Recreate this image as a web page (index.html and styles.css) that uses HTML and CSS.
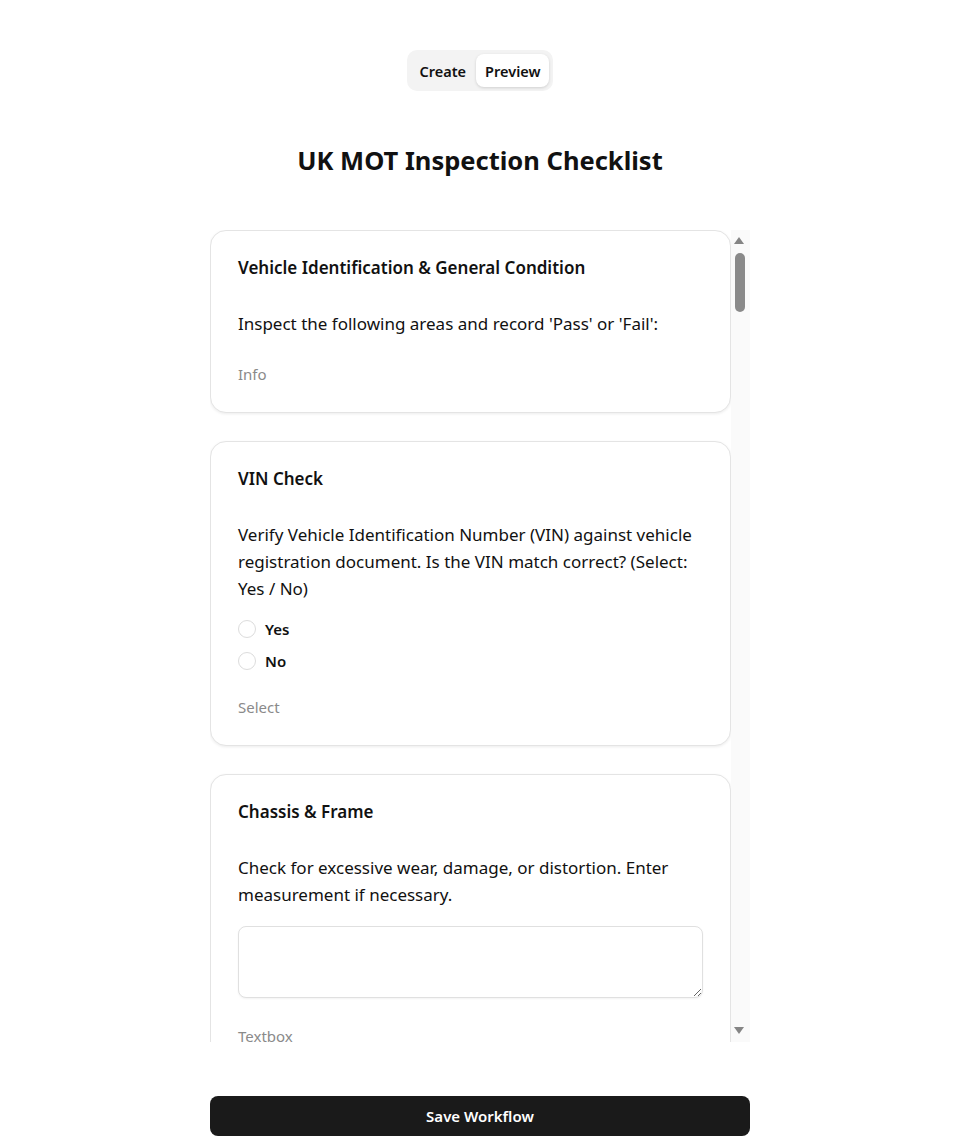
FILE: index.html
```html
<!DOCTYPE html>
<html lang="en">
<head>
<meta charset="utf-8">
<title>UK MOT Inspection Checklist</title>
<link rel="stylesheet" href="styles.css">
</head>
<body>
<div class="page">
  <div class="toggle-wrap">
    <div class="toggle">
      <button class="toggle-btn">Create</button>
      <button class="toggle-btn active">Preview</button>
    </div>
  </div>
  <h1 class="title">UK MOT Inspection Checklist</h1>
  <div class="scroller">
    <div class="list">
      <div class="card">
        <h2 class="card-title">Vehicle Identification &amp; General Condition</h2>
        <p class="card-desc">Inspect the following areas and record 'Pass' or 'Fail':</p>
        <div class="card-type">Info</div>
      </div>
      <div class="card">
        <h2 class="card-title">VIN Check</h2>
        <p class="card-desc">Verify Vehicle Identification Number (VIN) against vehicle registration document. Is the VIN match correct? (Select: Yes / No)</p>
        <div class="options">
          <label class="option"><span class="radio"></span>Yes</label>
          <label class="option"><span class="radio"></span>No</label>
        </div>
        <div class="card-type">Select</div>
      </div>
      <div class="card">
        <h2 class="card-title">Chassis &amp; Frame</h2>
        <p class="card-desc">Check for excessive wear, damage, or distortion. Enter measurement if necessary.</p>
        <textarea class="textbox"></textarea>
        <div class="card-type tb">Textbox</div>
      </div>
    </div>
    <div class="scrollbar">
      <div class="sb-btn up">
        <svg width="10" height="7" viewBox="0 0 10 7"><polygon points="5,0 10,7 0,7" fill="#858585"/></svg>
      </div>
      <div class="sb-track">
        <div class="sb-thumb"></div>
      </div>
      <div class="sb-btn down">
        <svg width="10" height="7" viewBox="0 0 10 7"><polygon points="0,0 10,0 5,7" fill="#858585"/></svg>
      </div>
    </div>
  </div>
  <button class="save">Save Workflow</button>
</div>
</body>
</html>
```
FILE: styles.css
```css
* { box-sizing: border-box; }
html, body { margin: 0; padding: 0; background: #fff; }
body {
  font-family: "Noto Sans", "Open Sans", sans-serif;
  color: #111;
}
.page {
  width: 540px;
  margin: 0 auto;
  padding: 50px 0 0;
  position: relative;
  left: 2px;
}
.toggle-wrap { display: flex; justify-content: center; }
.toggle {
  display: flex;
  gap: 1px;
  padding: 4px;
  background: #f3f3f3;
  border-radius: 10px;
}
.toggle-btn {
  font-family: inherit;
  font-size: 14.5px;
  font-weight: 600;
  color: #111;
  background: transparent;
  border: 0;
  border-radius: 8px;
  padding: 0 9px;
  height: 33px;
}
.toggle-btn.active {
  background: #fff;
  box-shadow: 0 1px 3px rgba(0,0,0,0.15);
}
.title {
  text-align: center;
  font-size: 25.5px;
  font-weight: 700;
  margin: 49px 0 0;
  line-height: 40px;
}
.scroller {
  margin-top: 50px;
  height: 812px;
  display: flex;
}
.list {
  flex: 1;
  min-width: 0;
  overflow: hidden;
  display: flex;
  flex-direction: column;
  gap: 28px;
  padding-bottom: 4px;
}
.scrollbar {
  flex: none;
  width: 19px;
  background: #fafafa;
  display: flex;
  flex-direction: column;
}
.sb-btn {
  flex: none;
  height: 21px;
  display: flex;
  justify-content: center;
  padding-left: 0;
}
.sb-btn.up { align-items: flex-start; padding-top: 7px; padding-right: 4px; }
.sb-btn.down { align-items: flex-start; padding-top: 6px; padding-right: 4px; }
.sb-btn svg { display: block; }
.sb-track { flex: 1; padding-top: 2px; }
.sb-thumb {
  width: 10px;
  height: 59px;
  margin-left: 4px;
  border-radius: 5px;
  background: #8a8a8a;
}
.card {
  flex: none;
  border: 1px solid #e4e4e4;
  border-radius: 16px;
  padding: 25px 27px 27px;
  box-shadow: 0 1px 3px rgba(0,0,0,0.08);
  background: #fff;
}
.card-title {
  font-size: 17px;
  font-weight: 600;
  margin: 0;
  line-height: 24px;
}
.card-desc {
  font-size: 17px;
  line-height: 27px;
  margin: 30px 0 0;
}
.card-type {
  margin-top: 26px;
  font-size: 15px;
  line-height: 22px;
  color: #8a8a8a;
}
.options {
  margin-top: 16px;
  display: flex;
  flex-direction: column;
  gap: 10px;
}
.options + .card-type { margin-top: 24px; }
.card-type.tb { margin-top: 27px; }
.option {
  display: flex;
  align-items: center;
  gap: 9px;
  font-size: 15px;
  font-weight: 600;
  line-height: 22px;
}
.radio {
  width: 18px;
  height: 18px;
  border: 1px solid #dcdcdc;
  border-radius: 50%;
  background: #fff;
}
.textbox {
  display: block;
  width: 100%;
  height: 72px;
  margin-top: 18px;
  border: 1px solid #e0e0e0;
  border-radius: 8px;
  resize: vertical;
  font-family: inherit;
  box-shadow: 0 1px 2px rgba(0,0,0,0.05);
}
.save {
  display: block;
  width: 100%;
  height: 40px;
  margin-top: 54px;
  border: 0;
  border-radius: 8px;
  background: #1a1a1a;
  color: #fff;
  font-family: inherit;
  font-size: 15px;
  font-weight: 600;
}
```
